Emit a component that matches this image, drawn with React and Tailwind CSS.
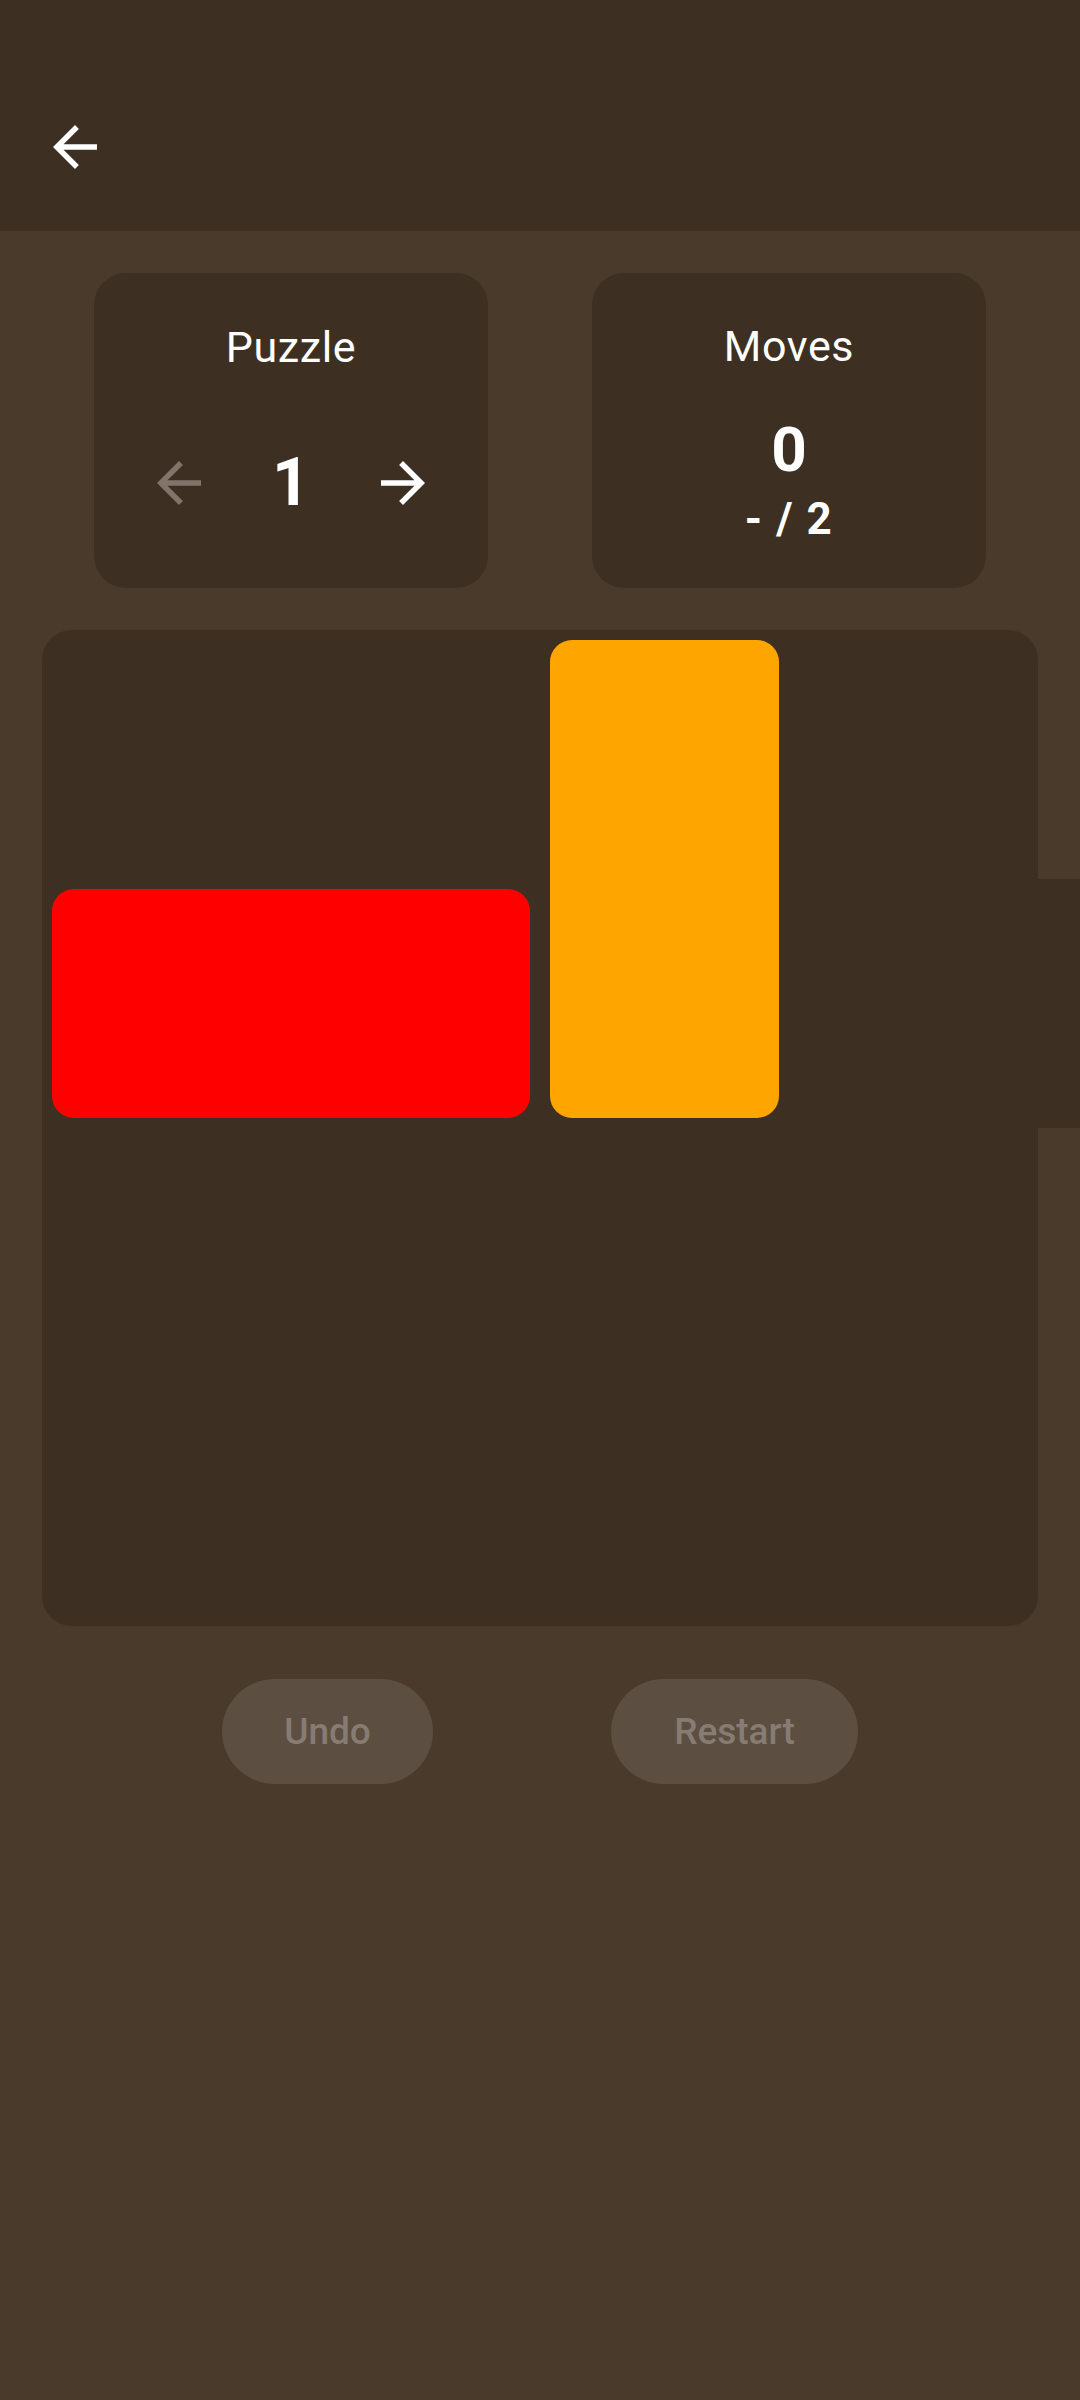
import React from "react";

const ArrowBack = ({ className }) => (
  <svg viewBox="0 0 24 24" className={className} fill="currentColor">
    <path d="M20 11H7.83l5.59-5.59L12 4l-8 8 8 8 1.41-1.41L7.83 13H20v-2z" />
  </svg>
);

const ArrowForward = ({ className }) => (
  <svg viewBox="0 0 24 24" className={className} fill="currentColor">
    <path d="M12 4l-1.41 1.41L16.17 11H4v2h12.17l-5.58 5.59L12 20l8-8z" />
  </svg>
);

const App = () => {
  return (
    <div
      className="min-h-[2400px] w-[1080px] bg-[#4a3a2c] text-white"
      style={{ fontFamily: "Roboto, 'Noto Sans', sans-serif" }}
    >
      {/* Top bar */}
      <div className="h-[231px] bg-[#3d3022] pt-[114px] pl-[42px]">
        <ArrowBack className="w-[66px] h-[66px] text-white" />
      </div>

      {/* Stat cards */}
      <div className="flex justify-around px-[42px] mt-[42px]">
        <div className="w-[394px] h-[315px] rounded-[32px] bg-[#3d3022] flex flex-col items-center pt-[48px]">
          <div className="text-[43px] leading-[52px] tracking-[0.6px]">Puzzle</div>
          <div className="flex items-center gap-[60px] mt-[71px]">
            <ArrowBack className="w-[66px] h-[66px] text-[#81756b]" />
            <div className="text-[66px] leading-[78px] font-bold">1</div>
            <ArrowForward className="w-[66px] h-[66px] text-white" />
          </div>
        </div>

        <div className="w-[394px] h-[315px] rounded-[32px] bg-[#3d3022] flex flex-col items-center pt-[47px]">
          <div className="text-[43px] leading-[52px] tracking-[0.6px]">Moves</div>
          <div className="text-[62px] leading-[72px] font-bold mt-[42px]">0</div>
          <div className="text-[44px] leading-[50px] font-bold tracking-[1.5px] mt-[8px]">- / 2</div>
        </div>
      </div>

      {/* Board */}
      <div className="relative mx-[42px] mt-[42px]">
        <div className="h-[996px] rounded-[30px] bg-[#3d3022] grid grid-cols-4 grid-rows-4">
          <div className="col-start-3 col-span-1 row-start-1 row-span-2 m-[10px] rounded-[22px] bg-[#ffa500]" />
          <div className="col-start-1 col-span-2 row-start-2 row-span-1 m-[10px] rounded-[22px] bg-[#ff0000]" />
        </div>
        {/* exit */}
        <div className="absolute right-[-42px] top-[249px] w-[42px] h-[249px] bg-[#3d3022]" />
      </div>

      {/* Buttons */}
      <div className="flex justify-evenly px-[44px] mt-[53px]">
        <button className="w-[211px] h-[105px] rounded-full bg-[#5c4e40] text-[#877c73] text-[37px] font-medium">
          Undo
        </button>
        <button className="w-[247px] h-[105px] rounded-full bg-[#5c4e40] text-[#877c73] text-[37px] font-medium">
          Restart
        </button>
      </div>
    </div>
  );
};

export default App;
